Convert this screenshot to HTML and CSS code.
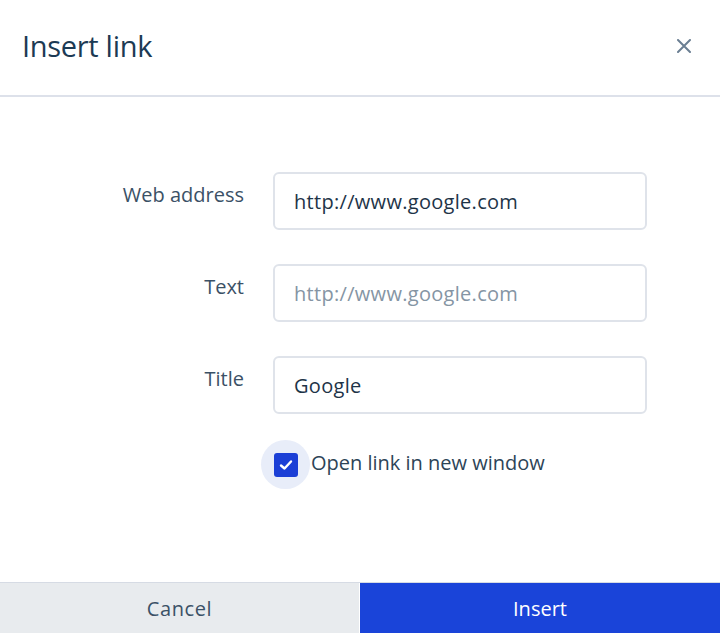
FILE: index.html
```html
<!DOCTYPE html>
<html>
<head>
  <title>Insert link</title>
  <link rel="stylesheet" href="styles.css">
</head>
<body>
  <div class="dialog">
    <div class="dialog-header">
      <h2>Insert link</h2>
      <button type="button" class="close-btn" aria-label="Close">
        <svg width="14" height="14" viewBox="0 0 14 14"><path d="M1 1L13 13M13 1L1 13" stroke="#6b7f93" stroke-width="2" stroke-linecap="round"/></svg>
      </button>
    </div>

    <form class="dialog-body">
      <div class="row">
        <label for="url">Web address</label>
        <input type="text" id="url" value="http://www.google.com">
      </div>
      <div class="row">
        <label for="text">Text</label>
        <input type="text" id="text" placeholder="http://www.google.com">
      </div>
      <div class="row">
        <label for="title">Title</label>
        <input type="text" id="title" value="Google">
      </div>
      <div class="check-row">
        <span class="check-halo">
          <span class="check-box">
            <svg width="14" height="12" viewBox="0 0 14 12"><path d="M2 6.5L5.5 9.5L12 2.5" fill="none" stroke="#fff" stroke-width="2.4" stroke-linecap="round" stroke-linejoin="round"/></svg>
          </span>
        </span>
        <span class="check-label">Open link in new window</span>
      </div>
    </form>

    <div class="dialog-footer">
      <button type="button" class="btn-cancel">Cancel</button>
      <button type="button" class="btn-insert">Insert</button>
    </div>
  </div>
</body>
</html>
```

FILE: styles.css
```css
* { box-sizing: border-box; margin: 0; padding: 0; }
body {
  font-family: 'Open Sans', Lato, sans-serif;
  background: #fff;
  color: #1e3a52;
  width: 720px;
  height: 633px;
  overflow: hidden;
}

.dialog {
  display: flex;
  flex-direction: column;
  height: 633px;
}

.dialog-header {
  height: 97px;
  display: flex;
  align-items: center;
  justify-content: space-between;
  padding: 0 26px 4px 22px;
  border-bottom: 2px solid #dde1ea;
}

.dialog-header h2 {
  font-size: 29px;
  font-weight: 400;
  color: #1c3a54;
  letter-spacing: -0.3px;
}

.close-btn {
  background: none;
  border: none;
  cursor: pointer;
  width: 20px;
  height: 20px;
  display: flex;
  align-items: center;
  justify-content: center;
}

.dialog-body {
  flex: 1;
  padding-top: 75px;
}

.row {
  display: flex;
  align-items: flex-start;
  margin-bottom: 34px;
}

.row label {
  width: 244px;
  text-align: right;
  font-size: 20px;
  color: #3b5166;
  padding-top: 9px;
}

.row input {
  margin-left: 29px;
  width: 374px;
  height: 58px;
  border: 2px solid #dfe3ea;
  border-radius: 6px;
  padding: 0 19px;
  font-family: inherit;
  font-size: 20px;
  letter-spacing: 0.3px;
  color: #1e3448;
  outline: none;
}

.row input::placeholder {
  color: #8595a4;
}

.check-row {
  display: flex;
  align-items: center;
  margin-top: -8px;
  padding-left: 261px;
}

.check-halo {
  width: 49px;
  height: 49px;
  border-radius: 50%;
  background: #e8edf9;
  display: flex;
  align-items: center;
  justify-content: center;
}

.check-box {
  width: 24px;
  height: 24px;
  border-radius: 3px;
  background: #1b3fd6;
  display: flex;
  align-items: center;
  justify-content: center;
}

.check-label {
  margin-left: 1px;
  margin-top: -5px;
  font-size: 20px;
  color: #2d4457;
}

.dialog-footer {
  display: flex;
  height: 51px;
  border-top: 1px solid #d6dbe4;
}

.dialog-footer button {
  border: none;
  font-family: inherit;
  font-size: 20px;
  cursor: pointer;
}

.btn-cancel {
  width: 360px;
  background: #e8ebee;
  color: #3b5166;
  letter-spacing: 0.6px;
  border-right: 1px solid #fff !important;
}

.btn-insert {
  flex: 1;
  background: #1a44d9;
  color: #fff;
}
```
